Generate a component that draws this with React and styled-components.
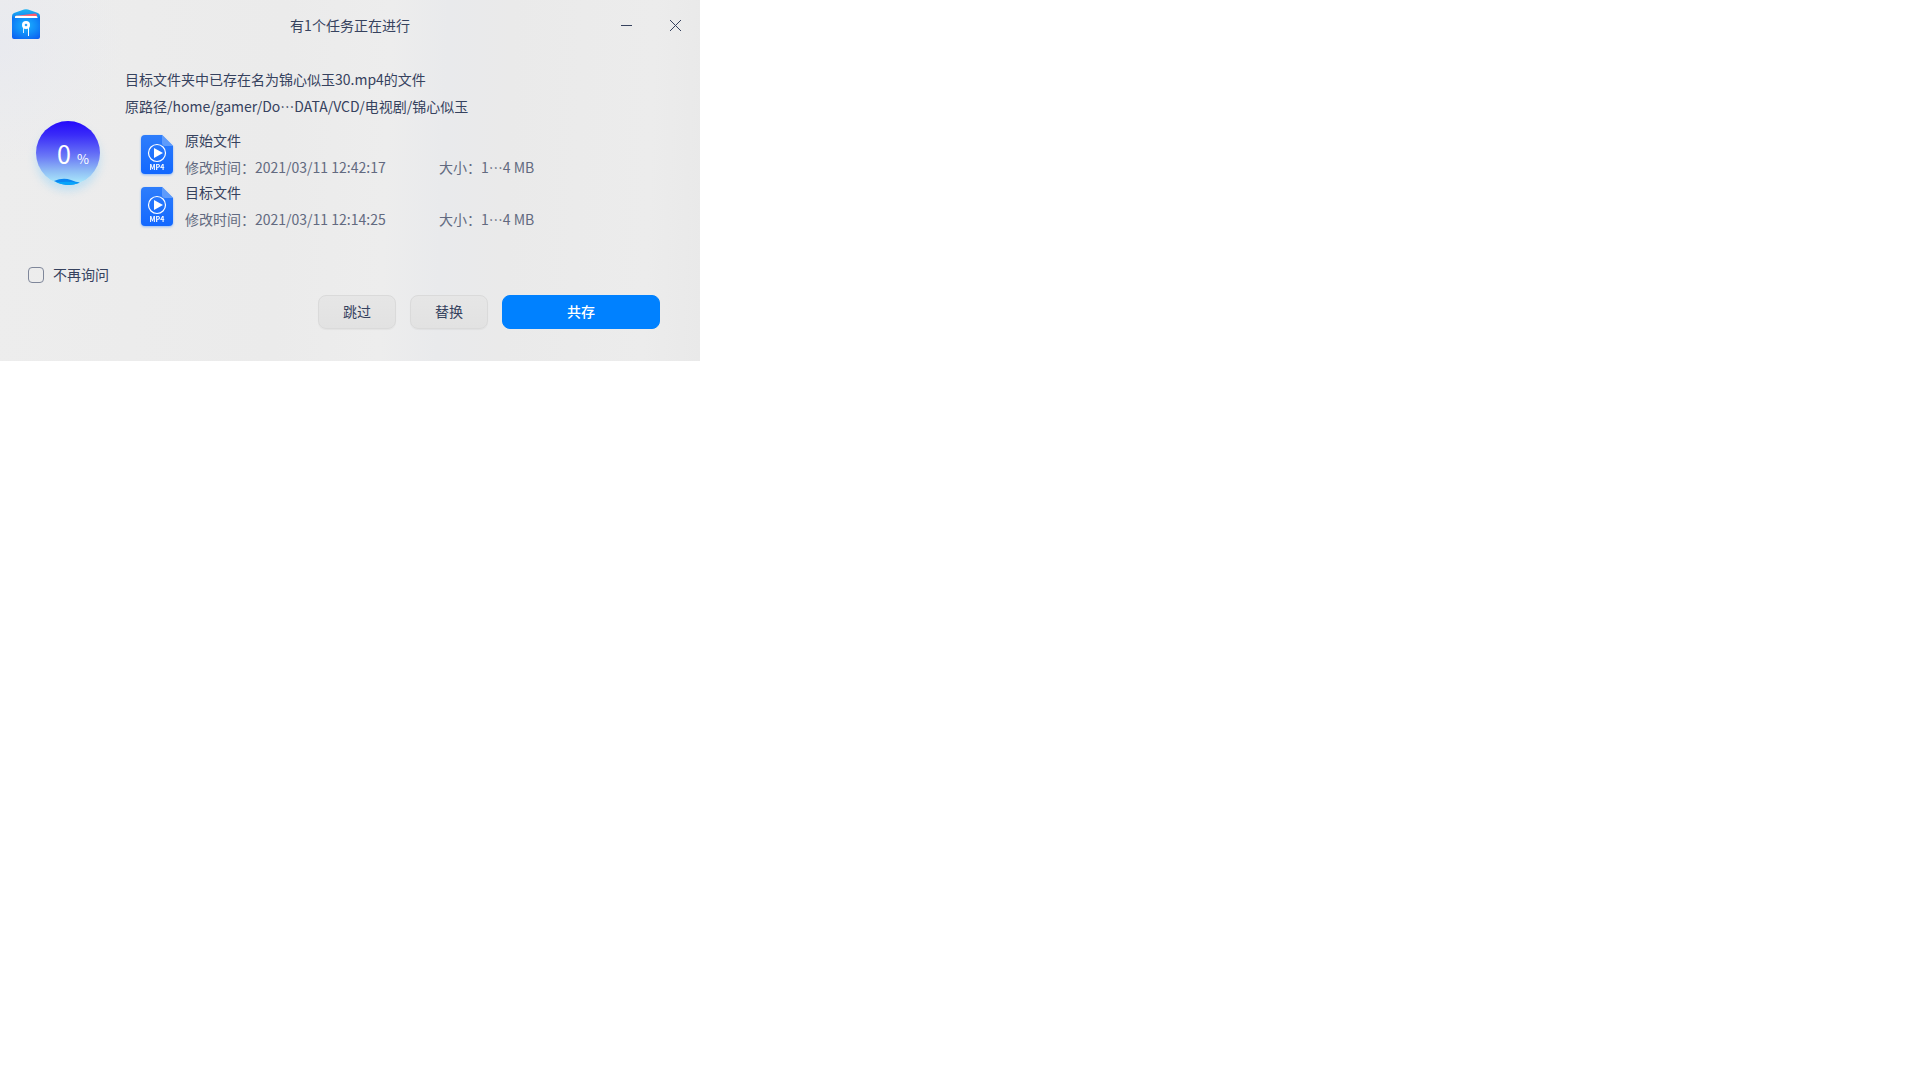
import React, { useId } from 'react'
import styled, { createGlobalStyle } from 'styled-components'

const files = [
  { name: '原始文件', time: '2021/03/11 12:42:17', size: '1\u22ef4 MB' },
  { name: '目标文件', time: '2021/03/11 12:14:25', size: '1\u22ef4 MB' },
]

const sourcePath = '原路径/home/gamer/Do\u2026DATA/VCD/电视剧/锦心似玉'

const AppLogo = () => (
  <svg width="32" height="36" viewBox="0 0 32 36" aria-hidden="true">
    <defs>
      <linearGradient id="logoBack" x1="0" y1="0" x2="0" y2="1">
        <stop offset="0" stopColor="#1fb4f4" />
        <stop offset="1" stopColor="#0a74ee" />
      </linearGradient>
      <radialGradient id="logoFront" cx="0.5" cy="0.4" r="0.75">
        <stop offset="0" stopColor="#1cb2ff" />
        <stop offset="0.5" stopColor="#118cf8" />
        <stop offset="1" stopColor="#0b5df0" />
      </radialGradient>
    </defs>
    <path d="M2 9 Q2 7 4 6 L14 2.500 Q16 1.800 18 2.500 L28 6 Q30 7 30 9 V14 H2 Z" fill="url(#logoBack)" />
    <path d="M5 9 L25 6.500 Q26.500 6.500 27 8 V11 H5 Z" fill="#fb5a6c" />
    <path d="M5 10 Q5 8.800 6.500 8.800 L26 9 Q27.500 9 27.500 10.500 V12 H5 Z" fill="#fff" />
    <path d="M2 9.500 L4 11 H28 L30 9.500 V30 Q30 32 28 32 H4 Q2 32 2 30 Z" fill="url(#logoFront)" />
    <circle cx="16" cy="18" r="4" fill="#fff" />
    <circle cx="16" cy="18" r="1.300" fill="#2aa2fb" />
    <path d="M13.500 21 V26" stroke="#fff" strokeOpacity="0.85" />
    <path d="M18.500 21 V29" stroke="#fff" />
  </svg>
)

const VideoIcon = () => {
  const id = useId()
  return (
    <FileSvg width="32" height="39" viewBox="0 0 32 39" aria-hidden="true">
      <defs>
        <linearGradient id={id} x1="0" y1="0" x2="0" y2="1">
          <stop offset="0" stopColor="#2e7dfb" />
          <stop offset="1" stopColor="#1268ff" />
        </linearGradient>
      </defs>
      <path d="M4 0 H21 L32 11 V35 Q32 39 28 39 H4 Q0 39 0 35 V4 Q0 0 4 0 Z" fill={`url(#${id})`} />
      <path d="M21 0 L32 11 H24 Q21 11 21 8 Z" fill="#5e9bfb" />
      <circle cx="16" cy="18" r="8.500" fill="none" stroke="#fff" strokeWidth="1.200" />
      <path d="M13 13 L22 18 L13 23 Z" fill="#fff" />
      <text x="16" y="35" textAnchor="middle" fill="#fff">MP4</text>
    </FileSvg>
  )
}

const Progress = ({ value }) => (
  <Ball role="progressbar" aria-valuenow={value} aria-label="进度">
    <Wave viewBox="0 0 64 64" aria-hidden="true">
      <path d="M18 60 Q27 56 35 59 Q40 61 44 61.500 Q32 67 18 60 Z" fill="#0a86f2" />
      <path d="M20 61.500 Q32 60 43 62 Q32 66 20 61.500 Z" fill="#07a4fa" />
    </Wave>
    <Value>{value}</Value>
    <Percent>%</Percent>
  </Ball>
)

const App = () => {
  return (
    <>
      <GlobalStyle />
      <Dialog lang="zh-CN">
        <TitleBar>
          <LogoBox><AppLogo /></LogoBox>
          <Title>有1个任务正在进行</Title>
          <WindowButtons>
            <WindowButton type="button" aria-label="最小化">
              <svg width="12" height="12" viewBox="0 0 12 12"><path d="M0 6.500 H11" /></svg>
            </WindowButton>
            <WindowButton type="button" aria-label="关闭">
              <svg width="12" height="12" viewBox="0 0 12 12"><path d="M0 1 L11 12 M11 1 L0 12" /></svg>
            </WindowButton>
          </WindowButtons>
        </TitleBar>

        <Body>
          <Progress value={0} />
          <Details>
            <Message>目标文件夹中已存在名为锦心似玉30.mp4的文件</Message>
            <Message>{sourcePath}</Message>
            <FileList>
              {files.map((file) => (
                <FileRow key={file.name}>
                  <VideoIcon />
                  <div>
                    <FileName>{file.name}</FileName>
                    <FileMeta>
                      <span>修改时间：{file.time}</span>
                      <span>大小：{file.size}</span>
                    </FileMeta>
                  </div>
                </FileRow>
              ))}
            </FileList>
          </Details>
        </Body>

        <AskLabel>
          <input type="checkbox" />
          <span>不再询问</span>
        </AskLabel>

        <Actions>
          <Button type="button">跳过</Button>
          <Button type="button">替换</Button>
          <Button type="button" $primary>共存</Button>
        </Actions>
      </Dialog>
    </>
  )
}

const GlobalStyle = createGlobalStyle`
  *{
    box-sizing: border-box;
  }
  body{
    margin: 0;
    background: #fff;
    color: #36425e;
    font-family: "Noto Sans CJK SC", sans-serif;
    font-size: 14px;
  }
  button{
    font: inherit;
    color: inherit;
  }
`;

const Dialog = styled.main`
  width: 100%;
  max-width: 700px;
  padding-bottom: 32px;
  background:
    radial-gradient(circle at 0 12%, rgba(230, 232, 240, 0.6), rgba(230, 232, 240, 0) 16%),
    linear-gradient(92deg, #ededed 0%, #ebebeb 40%, #ededed 55%, #e9eaec 63%, #eaeaea 72%, #ececec 92%, #e9e9e9 100%);
`;

const TitleBar = styled.header`
  display: grid;
  grid-template-columns: 1fr auto 1fr;
  align-items: center;
  height: 50px;
`;

const LogoBox = styled.div`
  display: flex;
  padding-left: 10px;
`;

const Title = styled.h1`
  margin: 0;
  font-size: 14px;
  font-weight: 400;
  line-height: 26px;
`;

const WindowButtons = styled.div`
  display: flex;
  justify-content: flex-end;
`;

const WindowButton = styled.button`
  display: flex;
  align-items: center;
  justify-content: center;
  width: 49px;
  height: 50px;
  padding: 0;
  border: 0;
  background: none;
  path{
    stroke: #36425e;
    fill: none;
  }
`;

const Body = styled.section`
  display: flex;
  gap: 25px;
  padding: 16px 36px 0;
`;

const Ball = styled.div`
  position: relative;
  display: flex;
  flex: none;
  align-items: baseline;
  gap: 6px;
  width: 64px;
  height: 64px;
  margin-top: 55px;
  padding-left: 21px;
  border-radius: 50%;
  color: #fff;
  line-height: 64px;
  background: linear-gradient(#2409fb 0%, #3a2cf8 22%, #6a78f6 55%, #8fbcf5 78%, #aef0fb 100%);
  box-shadow: 0 6px 8px rgba(130, 205, 250, 0.4);
`;

const Wave = styled.svg`
  position: absolute;
  inset: 0;
`;

const Value = styled.span`
  font-size: 25px;
`;

const Percent = styled.span`
  font-size: 13px;
`;

const Details = styled.div`
  flex: 1;
`;

const Message = styled.p`
  margin: 0;
  line-height: 27px;
`;

const FileList = styled.ul`
  margin: 8px 0 0;
  padding: 0 0 0 16px;
  list-style: none;
`;

const FileRow = styled.li`
  display: flex;
  align-items: center;
  gap: 12px;
  line-height: 26px;
`;

const FileSvg = styled.svg`
  flex: none;
  overflow: visible;
  filter: drop-shadow(0 1px 1px rgba(60, 140, 255, 0.5));
  text{
    font-size: 7px;
    font-weight: 700;
  }
`;

const FileName = styled.div`
  padding-bottom: 2px;
  line-height: 24px;
`;

const FileMeta = styled.div`
  display: grid;
  grid-template-columns: 254px auto;
  color: #626a80;
`;

const AskLabel = styled.label`
  display: flex;
  align-items: center;
  gap: 9px;
  width: fit-content;
  margin: 30px 0 0 28px;
  line-height: 24px;
  span{
    padding-bottom: 2px;
  }
  input{
    appearance: none;
    width: 16px;
    height: 16px;
    margin: 0;
    border: 1px solid #7f879a;
    border-radius: 4px;
  }
  input:checked{
    background: #0081ff;
  }
`;

const Actions = styled.div`
  display: flex;
  justify-content: flex-end;
  gap: 14px;
  padding: 7px 40px 0;
`;

const Button = styled.button`
  width: ${(props) => (props.$primary ? '158px' : '78px')};
  height: 34px;
  padding: 0 0 2px;
  border: 1px solid ${(props) => (props.$primary ? '#0081ff' : '#dadada')};
  border-radius: 8px;
  color: ${(props) => (props.$primary ? '#fff' : '#36425e')};
  background: ${(props) => (props.$primary ? '#0081ff' : 'linear-gradient(#e6e6e6, #e2e2e2)')};
  box-shadow: ${(props) => (props.$primary ? 'none' : '0 1px 1px rgba(0, 0, 0, 0.04)')};
  font-weight: ${(props) => (props.$primary ? 500 : 400)};
`;

export default App
